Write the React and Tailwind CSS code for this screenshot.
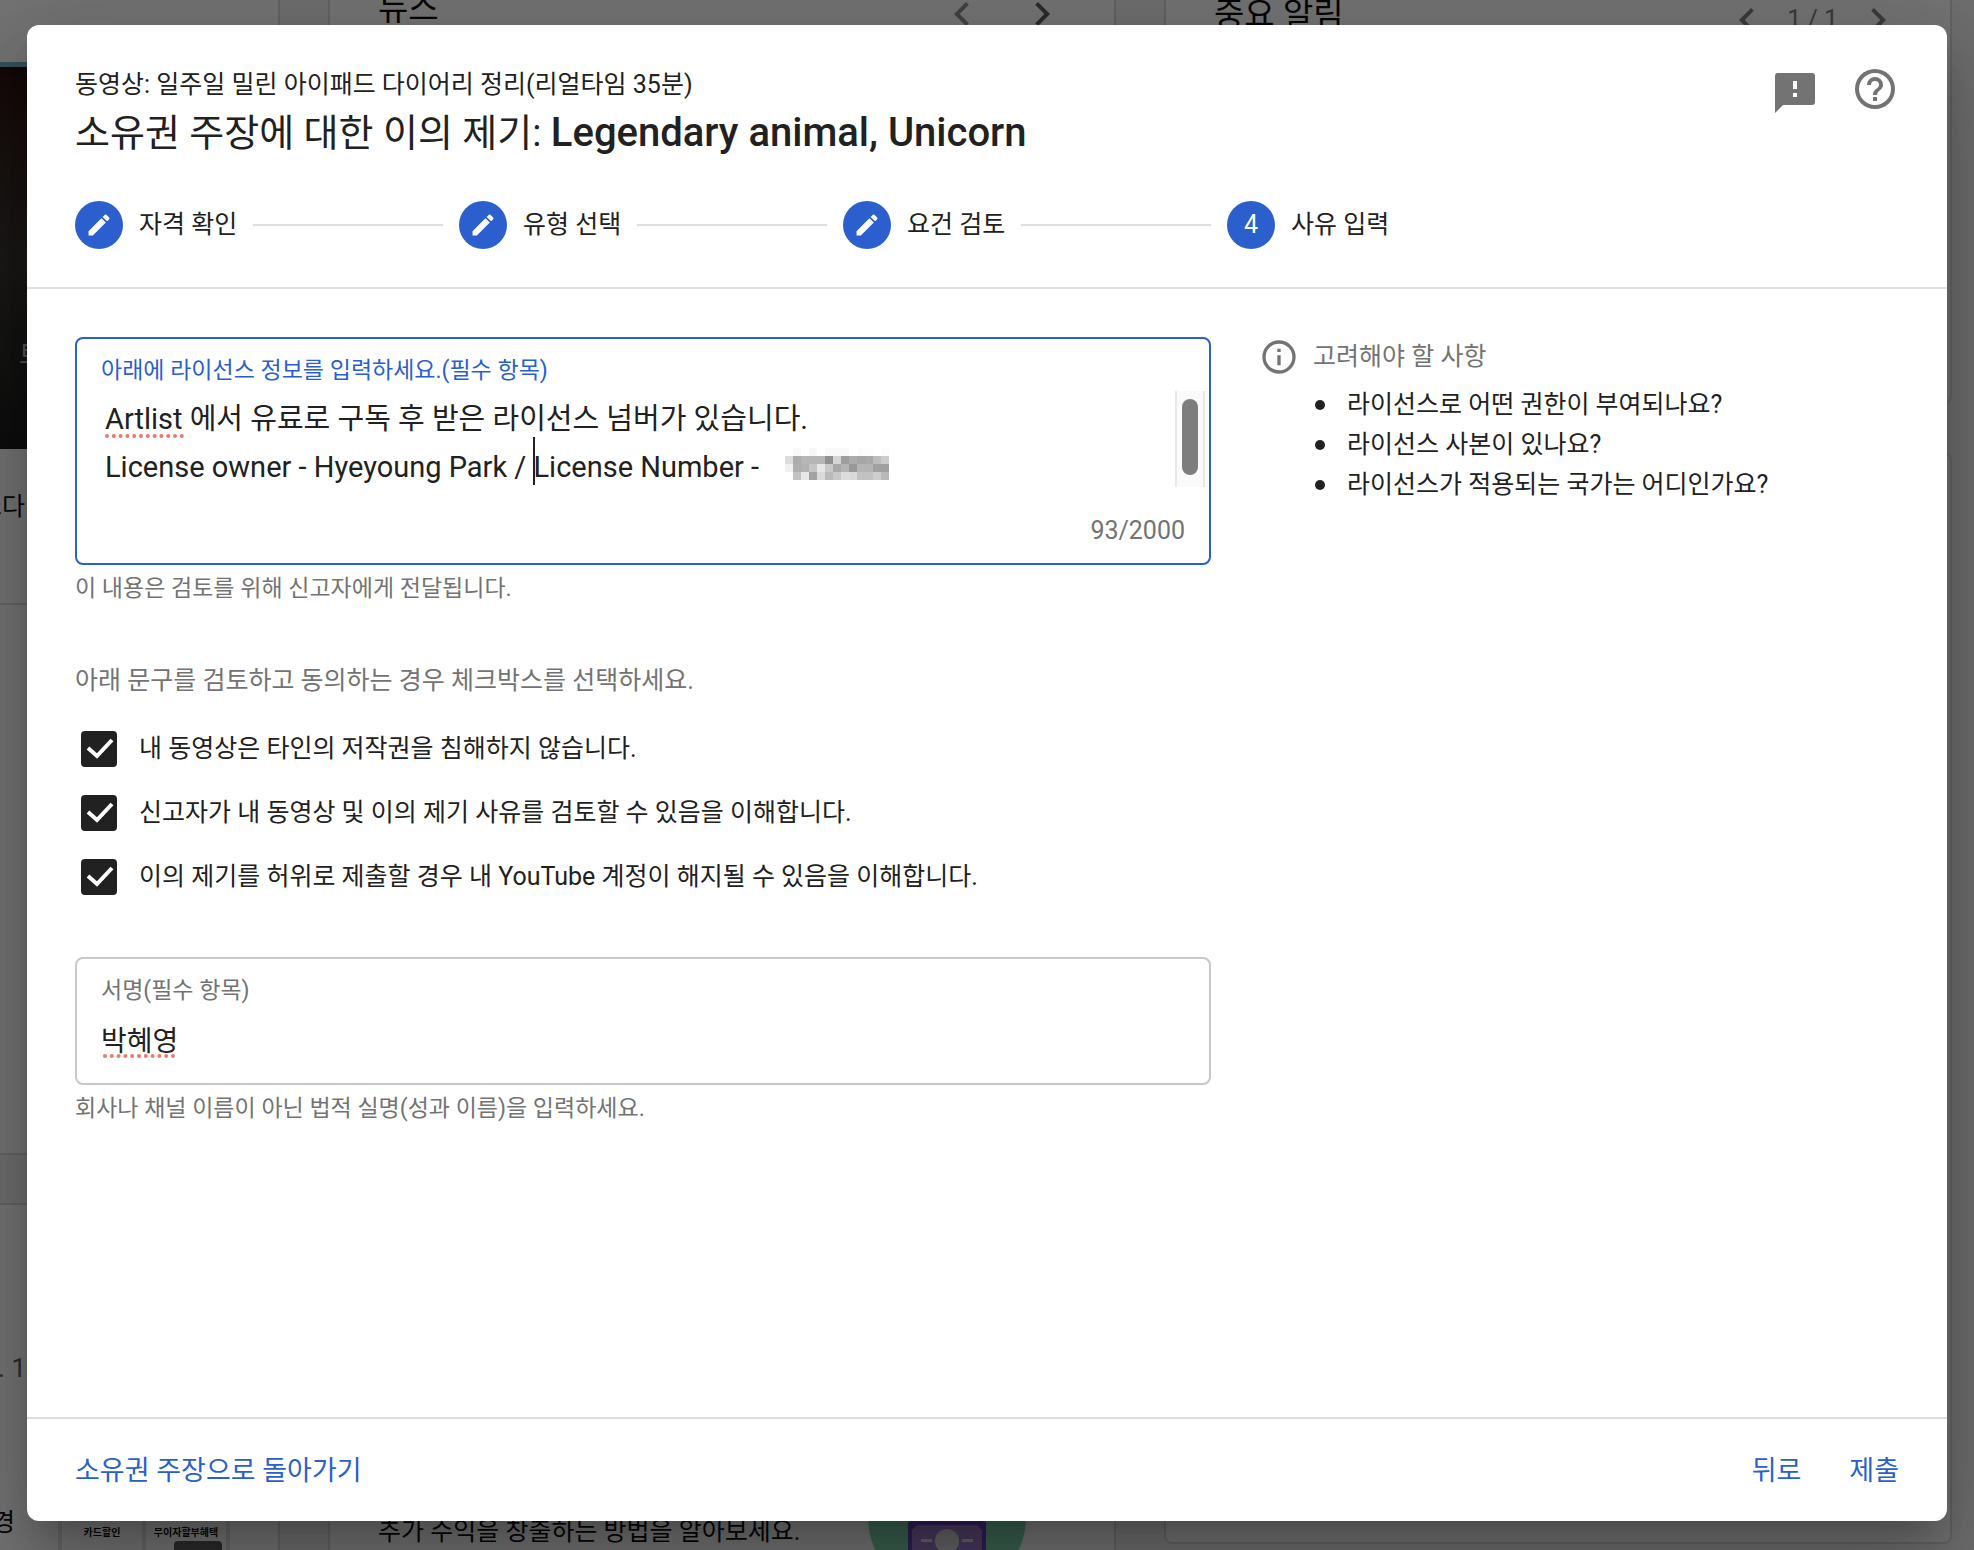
import React, { useState } from 'react';

const STEPS = ['자격 확인', '유형 선택', '요건 검토', '사유 입력'];

const TIPS = [
    '라이선스로 어떤 권한이 부여되나요?',
    '라이선스 사본이 있나요?',
    '라이선스가 적용되는 국가는 어디인가요?',
];

const AGREEMENTS = [
    '내 동영상은 타인의 저작권을 침해하지 않습니다.',
    '신고자가 내 동영상 및 이의 제기 사유를 검토할 수 있음을 이해합니다.',
    '이의 제기를 허위로 제출할 경우 내 YouTube 계정이 해지될 수 있음을 이해합니다.',
];

const LICENSE_TEXT = 'Artlist 에서 유료로 구독 후 받은 라이선스 넘버가 있습니다.\nLicense owner - Hyeyoung Park / License Number - ';

// grey level of each 8px block over the license number
const MOSAIC = [
    [255, 249, 255, 247, 255, 249, 249, 249, 255, 252, 253, 255, 251],
    [220, 172, 182, 182, 182, 145, 212, 158, 172, 166, 168, 188, 204],
    [240, 175, 178, 196, 230, 200, 168, 180, 153, 180, 180, 160, 160],
    [255, 194, 232, 162, 218, 186, 200, 220, 218, 194, 194, 205, 184],
];

function Icon({ className, viewBox = '0 0 24 24', children }) {
    return (
        <svg className={className} viewBox={viewBox} fill="currentColor" aria-hidden="true">
            {children}
        </svg>
    );
}

function Chevron({ right, className }) {
    return (
        <Icon className={className}>
            <path d={right ? 'M8.59 16.59 13.17 12 8.59 7.41 10 6l6 6-6 6z' : 'M15.41 7.41 14 6l-6 6 6 6 1.41-1.41L10.83 12z'} />
        </Icon>
    );
}

function Dashboard() {
    return (
        <div className="absolute inset-0 grid grid-rows-1 grid-cols-[280px_minmax(0,1fr)_minmax(0,1fr)] gap-12 pr-[22px] bg-[#f4f4f4] text-[#0f0f0f]" aria-hidden="true">
            <div className="flex flex-col gap-12">
                <div className="h-[1155px] shrink-0 bg-white border-r-2 border-b-2 border-[#dcdcdc]">
                    <div className="h-[62px]" />
                    <div className="h-[5px] bg-[#76b4cf]" />
                    <div className="h-[382px] pt-[268px] bg-linear-to-b from-[#2e1512] via-[#3a3733] to-[#1c1c1c] text-[26px] leading-[40px] text-[#bbb]">
                        <div className="w-[27px] pl-[19px] overflow-hidden whitespace-nowrap">토</div>
                    </div>
                    <div className="h-[156px] pt-[38px] border-b-2 border-[#dcdcdc]">
                        <div className="w-[25px] flex justify-end overflow-hidden whitespace-nowrap text-[25px] leading-[40px]">그다</div>
                    </div>
                </div>
                <div className="flex-1 min-h-0 overflow-hidden bg-white border-t-2 border-r-2 border-[#dcdcdc]">
                    <div className="h-[143px]" />
                    <div className="h-[155px] w-[26px] flex justify-end whitespace-nowrap text-[26px] leading-[40px] text-[#606060]">. 1</div>
                    <div className="flex items-start">
                        <div className="w-[58px] text-[25px] leading-[40px] -ml-2 mr-2">경</div>
                        <div className="flex gap-1 px-1 bg-[#e4e4e4] text-[10px] leading-[60px] font-bold text-center">
                            <div className="w-20 bg-white">카드할인</div>
                            <div className="w-20 h-12 bg-white">
                                <div className="h-[38px]">무이자할부혜택</div>
                                <div className="ml-7 w-12 h-4 rounded-t bg-[#606060]" />
                            </div>
                        </div>
                    </div>
                </div>
            </div>

            <div className="flex flex-col justify-between overflow-hidden bg-white border-x-2 border-[#dcdcdc] px-12">
                <div className="h-[26px] flex items-end justify-between overflow-hidden">
                    <div className="text-[33px] leading-[34px]">뉴스</div>
                    <div className="flex gap-8">
                        <Chevron className="w-12 h-12 -mb-3 text-[#909090]" />
                        <Chevron right className="w-12 h-12 -mb-3 text-[#606060]" />
                    </div>
                </div>
                <div className="flex items-end gap-[67px]">
                    <div className="whitespace-nowrap text-[25px] leading-[36px]">추가 수익을 창출하는 방법을 알아보세요.</div>
                    <svg className="w-[160px] h-[40px] shrink-0" viewBox="0 0 160 40">
                        <circle cx="80" cy="7" r="79" fill="#7fd6b0" />
                        <rect x="41" y="11" width="78" height="60" rx="3" fill="#6b3fc4" />
                        <path d="M50 15h60l5 5v21H45V20z" fill="#a07fce" />
                        <circle cx="80" cy="31" r="12" fill="#ddd" />
                        <path d="M54 29h11v3H54zM95 29h11v3H95z" fill="#ddd" />
                    </svg>
                </div>
            </div>

            <div className="flex flex-col gap-12 pb-1.5">
                <div className="h-[404px] bg-white border-2 border-t-0 border-[#dcdcdc] rounded-b-lg px-12">
                    <div className="h-[40px] flex justify-between overflow-hidden">
                        <div className="text-[33px] leading-[30px]">중요 알림</div>
                        <div className="flex items-center gap-4 text-[25px] text-[#808080]">
                            <Chevron className="w-12 h-12" />
                            1 / 1
                            <Chevron right className="w-12 h-12" />
                        </div>
                    </div>
                </div>
                <div className="flex-1 bg-white border-2 border-[#dcdcdc] rounded-lg" />
            </div>
        </div>
    );
}

function Stepper() {
    return (
        <ol className="flex">
            {STEPS.map((label, i) => {
                const last = i === STEPS.length - 1;
                return (
                    <li key={label} className={`flex items-center gap-4 text-[25px] leading-[32px] ${last ? '' : 'w-[384px] pr-4'}`}>
                        <span className="w-12 h-12 rounded-full bg-[#2a5fcd] text-white text-[25px] flex items-center justify-center">
                            {last ? i + 1 : (
                                <Icon className="w-7 h-7">
                                    <path d="M3 17.25V21h3.75L17.81 9.94l-3.75-3.75zM20.71 7.04a1 1 0 0 0 0-1.41l-2.34-2.34a1 1 0 0 0-1.41 0l-1.83 1.83 3.75 3.75z" />
                                </Icon>
                            )}
                        </span>
                        <span>{label}</span>
                        {!last && <span className="flex-1 h-0.5 bg-[#dedede]" />}
                    </li>
                );
            })}
        </ol>
    );
}

function Mosaic() {
    return (
        <svg className="absolute left-[684px] top-[57px] w-[104px] h-8" viewBox="0 0 13 4" shapeRendering="crispEdges" aria-hidden="true">
            {MOSAIC.map((row, y) => row.map((v, x) => (
                <rect key={`${x}-${y}`} x={x} y={y} width="1" height="1" fill={`rgb(${v},${v},${v})`} />
            )))}
        </svg>
    );
}

function Squiggle({ className }) {
    return (
        <svg className={className} aria-hidden="true">
            <line x1="2" y1="2" x2="100%" y2="2" stroke="#f0776c" strokeWidth="4" strokeLinecap="round" strokeDasharray="0 6.8" />
        </svg>
    );
}

export default function App() {
    const [license, setLicense] = useState(LICENSE_TEXT);
    const [signature, setSignature] = useState('박혜영');

    return (
        <div className="relative h-screen overflow-hidden p-[27px] pt-[25px] pb-[29px] font-[Roboto,'Noto_Sans_CJK_KR',sans-serif]">
            <Dashboard />
            <div className="absolute inset-0 bg-black/55" />

            <div role="dialog" aria-labelledby="dialog-title" className="relative h-full flex flex-col bg-white text-[#212121] rounded-xl shadow-[0_22px_30px_-14px_rgba(0,0,0,0.2),0_48px_76px_6px_rgba(0,0,0,0.14),0_18px_92px_16px_rgba(0,0,0,0.12)]">
                <header className="px-12 pt-10 pb-[38px] border-b-2 border-[#dedede]">
                    <div className="flex items-start justify-between">
                        <div className="pt-0.5">
                            <p className="text-[25px] leading-[36px]">동영상: 일주일 밀린 아이패드 다이어리 정리(리얼타임 35분)</p>
                            <h1 id="dialog-title" className="text-[38px] leading-[60px]">
                                소유권 주장에 대한 이의 제기: <span className="text-[40px] font-medium">Legendary animal, Unicorn</span>
                            </h1>
                        </div>
                        <div className="flex gap-8 text-[#737373]">
                            <button type="button" aria-label="의견 보내기">
                                <Icon className="w-12 h-12" viewBox="0 -2 24 24">
                                    <path d="M20.6 2H3.4C2.6 2 2 2.6 2 3.4V22l4-4h14.6c.8 0 1.4-.6 1.4-1.4V3.4c0-.8-.6-1.4-1.4-1.4zM13 14h-2v-2h2zm0-4h-2V6h2z" />
                                </Icon>
                            </button>
                            <button type="button" aria-label="도움말">
                                <Icon className="w-12 h-12">
                                    <path d="M11 18h2v-2h-2zm1-16a10 10 0 1 0 0 20 10 10 0 0 0 0-20zm0 18a8 8 0 1 1 0-16 8 8 0 0 1 0 16zm0-14a4 4 0 0 0-4 4h2a2 2 0 1 1 4 0c0 2-3 1.75-3 5h2c0-2.25 3-2.5 3-5a4 4 0 0 0-4-4z" />
                                </Icon>
                            </button>
                        </div>
                    </div>
                    <div className="mt-[38px]">
                        <Stepper />
                    </div>
                </header>

                <main className="flex-1 flex items-start gap-12 px-12 pt-12">
                    <form className="w-[1136px]">
                        <div className="h-[228px] border-2 border-[#2a5fcd] rounded-lg px-6 pt-3">
                            <label htmlFor="license" className="block text-[23px] leading-[40px] text-[#2a5fcd]">아래에 라이선스 정보를 입력하세요.(필수 항목)</label>
                            <div className="relative -mr-5 pl-1 flex">
                                <textarea
                                    id="license"
                                    spellCheck={false}
                                    value={license}
                                    onChange={e => setLicense(e.target.value)}
                                    className="flex-1 h-[100px] -mb-1 pt-1 resize-none overflow-hidden outline-none text-[29px] leading-[48px]"
                                />
                                <Squiggle className="absolute left-1 top-[43px] w-20 h-1" />
                                <span className="absolute left-[432px] top-[46px] w-0.5 h-12 bg-[#212121]" />
                                <Mosaic />
                                <div className="w-[30px] h-24 bg-[#fafafa] border-x-2 border-[#e8e8e8] flex justify-center py-2">
                                    <div className="w-4 h-[76px] rounded-full bg-[#7d7d7d]" />
                                </div>
                            </div>
                            <p className="mt-6 text-right text-[25px] leading-[40px] text-[#737373]">93/2000</p>
                        </div>
                        <p className="mt-1 text-[23px] leading-[40px] text-[#737373]">이 내용은 검토를 위해 신고자에게 전달됩니다.</p>

                        <p className="mt-[52px] mb-4 text-[25px] leading-[40px] text-[#737373]">아래 문구를 검토하고 동의하는 경우 체크박스를 선택하세요.</p>
                        {AGREEMENTS.map((text, i) => (
                            <label key={i} className="h-16 pl-1.5 flex items-center gap-[22px] text-[25px] leading-[40px]">
                                <span className="relative w-9 h-9">
                                    <input type="checkbox" defaultChecked className="peer block w-9 h-9 appearance-none rounded border-[3px] border-[#212121] checked:bg-[#212121]" />
                                    <svg className="absolute inset-0 w-9 h-9 pointer-events-none opacity-0 peer-checked:opacity-100" viewBox="0 0 36 36" fill="none" stroke="#fff" strokeWidth="4">
                                        <path d="M7 17l9 8L31 9" />
                                    </svg>
                                </span>
                                {text}
                            </label>
                        ))}

                        <div className="mt-12 h-32 border-2 border-[#c8c8c8] rounded-lg px-6 pt-3 relative">
                            <label htmlFor="signature" className="block text-[23px] leading-[40px] text-[#737373]">서명(필수 항목)</label>
                            <input
                                id="signature"
                                type="text"
                                spellCheck={false}
                                value={signature}
                                onChange={e => setSignature(e.target.value)}
                                className="block w-full h-14 outline-none text-[28px]"
                            />
                            <Squiggle className="absolute left-[26px] top-[95px] w-[74px] h-1" />
                        </div>
                        <p className="mt-1 text-[23px] leading-[40px] text-[#737373]">회사나 채널 이름이 아닌 법적 실명(성과 이름)을 입력하세요.</p>
                    </form>

                    <aside className="text-[25px] leading-[40px]">
                        <h2 className="flex items-center gap-3.5 text-[#737373]">
                            <Icon className="w-10 h-10">
                                <path d="M11 17h2v-6h-2zm1-15a10 10 0 1 0 0 20 10 10 0 0 0 0-20zm0 18a8 8 0 1 1 0-16 8 8 0 0 1 0 16zM11 9h2V7h-2z" />
                            </Icon>
                            고려해야 할 사항
                        </h2>
                        <ul className="mt-2 pl-14">
                            {TIPS.map(tip => (
                                <li key={tip} className="flex items-center gap-[22px]">
                                    <span className="w-2.5 h-2.5 rounded-full bg-[#212121]" />
                                    {tip}
                                </li>
                            ))}
                        </ul>
                    </aside>
                </main>

                <footer className="h-[104px] px-12 pt-0.5 flex items-center justify-between border-t-2 border-[#dedede] text-[27px] leading-[40px] text-[#2a5fcd]">
                    <button type="button">소유권 주장으로 돌아가기</button>
                    <div className="flex gap-12">
                        <button type="button">뒤로</button>
                        <button type="button">제출</button>
                    </div>
                </footer>
            </div>
        </div>
    );
}
